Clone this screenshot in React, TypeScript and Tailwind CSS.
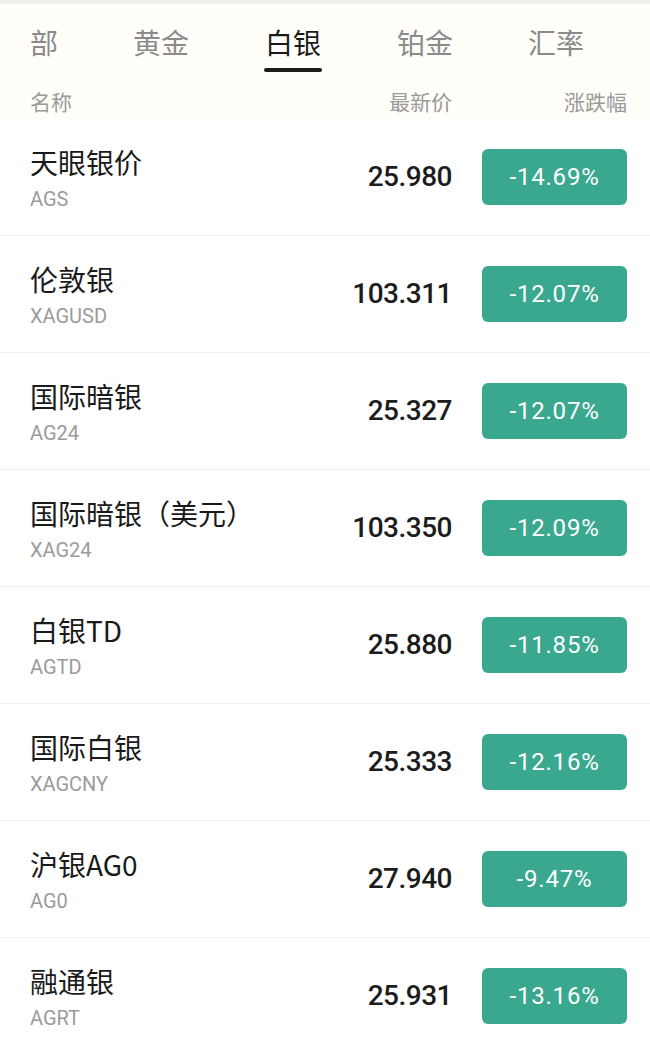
import React from 'react';

const tabs = ['部', '黄金', '白银', '铂金', '汇率'];

const rows = [
  { name: '天眼银价', code: 'AGS', price: '25.980', change: '-14.69%' },
  { name: '伦敦银', code: 'XAGUSD', price: '103.311', change: '-12.07%' },
  { name: '国际暗银', code: 'AG24', price: '25.327', change: '-12.07%' },
  { name: '国际暗银（美元）', code: 'XAG24', price: '103.350', change: '-12.09%' },
  { name: '白银TD', code: 'AGTD', price: '25.880', change: '-11.85%' },
  { name: '国际白银', code: 'XAGCNY', price: '25.333', change: '-12.16%' },
  { name: '沪银AG0', code: 'AG0', price: '27.940', change: '-9.47%' },
  { name: '融通银', code: 'AGRT', price: '25.931', change: '-13.16%' },
];

const cjk = "font-['Noto_Sans_CJK_SC',sans-serif]";
const num = "font-['Roboto','Noto_Sans_CJK_SC',sans-serif]";

function Tabs() {
  return (
    <div className="flex h-[84px] items-start gap-[75px] pl-[30px] pt-[18px]">
      {tabs.map((t) => {
        const active = t === '白银';
        return (
          <div key={t} className="flex flex-col items-center">
            <span className={`${cjk} text-[28px] leading-[40px] ${active ? 'text-[#1a1a1a]' : 'text-[#8a8a8a]'}`}>
              {t}
            </span>
            {active ? <div className="mt-[6px] h-[4px] w-[58px] rounded-full bg-[#1a1a1a]" /> : null}
          </div>
        );
      })}
    </div>
  );
}

function Row({ name, code, price, change }: { name: string; code: string; price: string; change: string }) {
  return (
    <div className="flex h-[117px] items-center border-b border-[#f0f0f0] pl-[30px] pr-[23px]">
      <div className="flex flex-1 flex-col">
        <span className={`${cjk} text-[28px] leading-[36px] text-[#1a1a1a]`}>{name}</span>
        <span className={`${num} mt-[7px] text-[20px] leading-[24px] text-[#9b9b9b]`}>{code}</span>
      </div>
      <span className={`${num} text-[28px] font-medium tracking-[-0.5px] text-[#1c1c1c]`}>{price}</span>
      <div className="ml-[30px] flex h-[56px] w-[145px] items-center justify-center rounded-[6px] bg-[#3aa88f]">
        <span className={`${num} text-[24px] tracking-[0.8px] text-white`}>{change}</span>
      </div>
    </div>
  );
}

export default function App() {
  return (
    <div className="h-[1040px] w-[650px] overflow-hidden bg-white">
      <div className="h-[4px] bg-[#eeeeee]" />
      <div className="bg-[#fffef9]">
        <Tabs />
        <div className="flex h-[31px] items-center pl-[30px] pr-[23px] text-[21px] text-[#9a9a9a]">
          <span className={`${cjk} flex-1 -mt-[3px]`}>名称</span>
          <span className={`${cjk} -mt-[3px]`}>最新价</span>
          <span className={`${cjk} -mt-[3px] ml-[112px]`}>涨跌幅</span>
        </div>
      </div>
      <div>
        {rows.map((r) => (
          <Row key={r.code} {...r} />
        ))}
      </div>
    </div>
  );
}
